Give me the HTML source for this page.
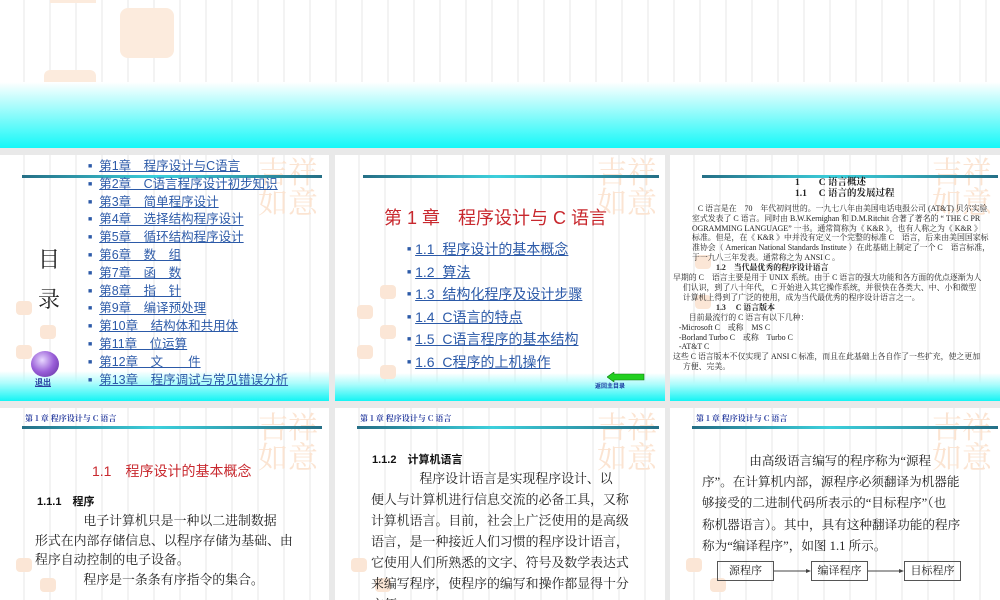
<!DOCTYPE html>
<html><head><meta charset="utf-8"><style>
*{margin:0;padding:0;box-sizing:border-box}
body{width:1000px;height:600px;overflow:hidden;background:#e9e9e9;position:relative;font-family:"Liberation Sans","Noto Sans CJK SC",sans-serif}
.s{position:absolute;background:#fff;overflow:hidden;
background-image:repeating-linear-gradient(90deg,transparent 0,transparent 23px,#f3f3f3 23px,#f3f3f3 25px,transparent 25px,transparent 26px);}
.grad{position:absolute;left:0;right:0;bottom:0;height:28px;background:linear-gradient(rgba(255,255,255,0),#aefcfc 40%,#14f4f4)}
.bar{position:absolute;height:3px;background:linear-gradient(90deg,#256f86,#3cd0dc 45%,#256f86)}
.a{position:absolute;white-space:nowrap}
.seal{position:absolute;color:#fbe4d2;font-family:"Noto Serif CJK SC",serif;line-height:1}
.st{position:absolute;width:16px;height:14px;background:#fbe6d6;border-radius:4px}
.li{color:#2c5aa8;text-decoration:underline}
.b{color:#2c5aa8;font-size:7px;vertical-align:middle}
.hd{position:absolute;font-size:8px;font-weight:bold;color:#2a3fa0;font-family:"Noto Serif CJK SC",serif}
.sr{font-family:"Liberation Serif","Noto Serif CJK SC",serif;color:#222}
.list div{white-space:nowrap;overflow:visible}
</style></head><body>

<!-- top slide -->
<div class="s" style="left:0;top:0;width:1000px;height:148px">
 <div style="position:absolute;left:120px;top:8px;width:54px;height:50px;background:#fcebdd;border-radius:8px"></div>
 <div style="position:absolute;left:44px;top:70px;width:52px;height:14px;background:#fcebdd;border-radius:6px 6px 0 0"></div>
 <div style="position:absolute;left:50px;top:0;width:46px;height:3px;background:#fcebdd"></div>
 <div style="position:absolute;left:0;right:0;top:82px;height:66px;background:linear-gradient(#ffffff,#aefcfc 35%,#14f8f8)"></div>
</div>

<!-- row1 slide1 -->
<div class="s" style="left:0;top:155px;width:329px;height:246px">
 <div class="grad" style="height:30px"></div>
 <div class="seal" style="left:258px;top:0;font-size:30px">吉祥<br>如意</div>
 <div class="bar" style="left:22px;top:20px;width:300px"></div>
 <div class="st" style="left:16px;top:146px"></div><div class="st" style="left:40px;top:170px"></div><div class="st" style="left:16px;top:190px"></div>
 <div class="a sr" style="left:38px;top:88px;font-size:22px">目</div>
 <div class="a sr" style="left:38px;top:128px;font-size:22px">录</div>
 <div style="position:absolute;left:31px;top:196px;width:28px;height:26px;border-radius:50%;background:radial-gradient(circle at 40% 35%,#e8d8ff,#9a5fd8 50%,#5a2d9a)"></div>
 <div class="a" style="left:35px;top:222px;font-size:8px;font-weight:bold;color:#2a3fa0;text-decoration:underline">退出</div>
 <div class="a list" style="left:88px;top:3px;font-size:12.5px;line-height:17.8px">
  <div style="height:17.8px"><span class="b">■</span>&nbsp; <span class="li">第1章　程序设计与C语言</span></div>
  <div style="height:17.8px"><span class="b">■</span>&nbsp; <span class="li">第2章　C语言程序设计初步知识</span></div>
  <div style="height:17.8px"><span class="b">■</span>&nbsp; <span class="li">第3章　简单程序设计 </span></div>
  <div style="height:17.8px"><span class="b">■</span>&nbsp; <span class="li">第4章　选择结构程序设计 </span></div>
  <div style="height:17.8px"><span class="b">■</span>&nbsp; <span class="li">第5章　循环结构程序设计 </span></div>
  <div style="height:17.8px"><span class="b">■</span>&nbsp; <span class="li">第6章　数　组 </span></div>
  <div style="height:17.8px"><span class="b">■</span>&nbsp; <span class="li">第7章　函　数 </span></div>
  <div style="height:17.8px"><span class="b">■</span>&nbsp; <span class="li">第8章　指　针 </span></div>
  <div style="height:17.8px"><span class="b">■</span>&nbsp; <span class="li">第9章　编译预处理 </span></div>
  <div style="height:17.8px"><span class="b">■</span>&nbsp; <span class="li">第10章　结构体和共用体 </span></div>
  <div style="height:17.8px"><span class="b">■</span>&nbsp; <span class="li">第11章　位运算 </span></div>
  <div style="height:17.8px"><span class="b">■</span>&nbsp; <span class="li">第12章　文　　件 </span></div>
  <div style="height:17.8px"><span class="b">■</span>&nbsp; <span class="li">第13章　程序调试与常见错误分析</span></div>
 </div>
</div>

<!-- row1 slide2 -->
<div class="s" style="left:335px;top:155px;width:330px;height:246px">
 <div class="grad"></div>
 <div class="seal" style="left:262px;top:0;font-size:30px">吉祥<br>如意</div>
 <div class="bar" style="left:28px;top:20px;width:296px"></div>
 <div class="st" style="left:45px;top:130px"></div><div class="st" style="left:22px;top:150px"></div><div class="st" style="left:45px;top:170px"></div><div class="st" style="left:22px;top:190px"></div><div class="st" style="left:45px;top:210px"></div>
 <div class="a" style="left:49px;top:49px;font-size:18px;color:#c8282e">第 1 章　程序设计与 C 语言</div>
 <div class="a list" style="left:72px;top:83px;line-height:22.6px;font-size:14px">
  <div style="height:22.6px"><span class="b">■</span> <span class="li">1.1&nbsp; 程序设计的基本概念 </span></div>
  <div style="height:22.6px"><span class="b">■</span> <span class="li">1.2&nbsp; 算法 </span></div>
  <div style="height:22.6px"><span class="b">■</span> <span class="li">1.3&nbsp; 结构化程序及设计步骤 </span></div>
  <div style="height:22.6px"><span class="b">■</span> <span class="li">1.4&nbsp; C语言的特点 </span></div>
  <div style="height:22.6px"><span class="b">■</span> <span class="li">1.5&nbsp; C语言程序的基本结构 </span></div>
  <div style="height:22.6px"><span class="b">■</span> <span class="li">1.6&nbsp; C程序的上机操作 </span></div>
 </div>
 <svg style="position:absolute;left:272px;top:217px" width="40" height="10"><polygon points="0,5 7,0 7,2 37,2 37,8 7,8 7,10" fill="#22d020" stroke="#117711" stroke-width=".6"/></svg>
 <div class="a" style="left:260px;top:226px;font-size:6px;font-weight:bold;color:#1a3aa0">返回主目录</div>
</div>

<!-- row1 slide3 -->
<div class="s sr" style="left:670px;top:155px;width:330px;height:246px;font-size:7.9px;line-height:9.8px">
 <div class="grad"></div>
 <div class="seal" style="left:262px;top:0;font-size:30px">吉祥<br>如意</div>
 <div class="bar" style="left:32px;top:20px;width:296px"></div>
 <div class="st" style="left:25px;top:100px"></div><div class="st" style="left:25px;top:140px"></div>
 <div class="a" style="left:125px;top:24px;font-size:9.5px;font-weight:bold">1　　C 语言概述</div>
 <div class="a" style="left:125px;top:35px;font-size:9.5px;font-weight:bold">1.1　 C 语言的发展过程</div>
 <div class="a" style="left:20px;top:49px">
  <div>&nbsp;&nbsp;&nbsp;&nbsp;C 语言是在　70　年代初问世的。一九七八年由美国电话电报公司 (AT&amp;T) 贝尔实验</div>
  <div>&nbsp;室式发表了 C 语言。同时由 B.W.Kernighan 和 D.M.Ritchit 合著了著名的 “ THE C PR</div>
  <div>&nbsp;OGRAMMING LANGUAGE” 一书。通常简称为《 K&amp;R 》，也有人称之为《 K&amp;R 》</div>
  <div>&nbsp;标准。但是，在《 K&amp;R 》中并没有定义一个完整的标准 C　语言，后来由美国国家标</div>
  <div>&nbsp;准协会（ American National Standards Institute ）在此基础上制定了一个 C　语言标准，</div>
  <div>&nbsp;于一九八三年发表。通常称之为 ANSI C 。</div>
 </div>
 <div class="a" style="left:46px;top:108px;font-weight:bold">1.2　当代最优秀的程序设计语言</div>
 <div class="a" style="left:3px;top:118px">
  <div>早期的 C　语言主要是用于 UNIX 系统。由于 C 语言的强大功能和各方面的优点逐渐为人</div>
  <div>&nbsp;&nbsp;&nbsp;&nbsp;&nbsp;们认识，到了八十年代， C 开始进入其它操作系统，并很快在各类大、中、小和微型</div>
  <div>&nbsp;&nbsp;&nbsp;&nbsp;&nbsp;计算机上得到了广泛的使用，成为当代最优秀的程序设计语言之一。</div>
 </div>
 <div class="a" style="left:46px;top:148px;font-weight:bold">1.3　 C 语言版本</div>
 <div class="a" style="left:3px;top:158px">
  <div>&nbsp;&nbsp;&nbsp;&nbsp;&nbsp;&nbsp;&nbsp;&nbsp;目前最流行的 C 语言有以下几种：</div>
  <div>&nbsp;&nbsp;&nbsp;-Microsoft C　或称　MS C</div>
  <div>&nbsp;&nbsp;&nbsp;-Borland Turbo C　或称　Turbo C</div>
  <div>&nbsp;&nbsp;&nbsp;-AT&amp;T C</div>
  <div>这些 C 语言版本不仅实现了 ANSI C 标准，而且在此基础上各自作了一些扩充，使之更加</div>
  <div>&nbsp;&nbsp;&nbsp;&nbsp;&nbsp;方便、完美。</div>
 </div>
</div>

<!-- row2 slide1 -->
<div class="s" style="left:0;top:408px;width:329px;height:192px">
 <div class="seal" style="left:258px;top:2px;font-size:30px">吉祥<br>如意</div>
 <div class="hd" style="left:25px;top:5px">第 1 章 程序设计与 C 语言</div>
 <div class="bar" style="left:22px;top:18px;width:300px"></div>
 <div class="st" style="left:16px;top:150px"></div><div class="st" style="left:40px;top:170px"></div>
 <div class="a" style="left:92px;top:53px;font-size:14px;color:#c8282e">1.1　程序设计的基本概念</div>
 <div class="a" style="left:37px;top:85px;font-size:11px;font-weight:bold;color:#111">1.1.1　程序</div>
 <div class="a sr" style="left:35px;top:104px;font-size:12.9px;line-height:19.6px">
  <div>&nbsp;&nbsp;&nbsp;&nbsp;&nbsp;&nbsp;&nbsp;&nbsp;&nbsp;&nbsp;&nbsp;&nbsp;&nbsp;&nbsp;&nbsp;电子计算机只是一种以二进制数据</div>
  <div>形式在内部存储信息、以程序存储为基础、由</div>
  <div>程序自动控制的电子设备。</div>
  <div>&nbsp;&nbsp;&nbsp;&nbsp;&nbsp;&nbsp;&nbsp;&nbsp;&nbsp;&nbsp;&nbsp;&nbsp;&nbsp;&nbsp;&nbsp;程序是一条条有序指令的集合。</div>
 </div>
</div>

<!-- row2 slide2 -->
<div class="s" style="left:335px;top:408px;width:330px;height:192px">
 <div class="seal" style="left:262px;top:2px;font-size:30px">吉祥<br>如意</div>
 <div class="hd" style="left:25px;top:5px">第 1 章 程序设计与 C 语言</div>
 <div class="bar" style="left:22px;top:18px;width:302px"></div>
 <div class="st" style="left:16px;top:150px"></div><div class="st" style="left:40px;top:170px"></div>
 <div class="a" style="left:37px;top:43px;font-size:11px;font-weight:bold;color:#111">1.1.2　计算机语言</div>
 <div class="a sr" style="left:36px;top:61px;font-size:12.9px;line-height:21px">
  <div>&nbsp;&nbsp;&nbsp;&nbsp;&nbsp;&nbsp;&nbsp;&nbsp;&nbsp;&nbsp;&nbsp;&nbsp;&nbsp;&nbsp;&nbsp;程序设计语言是实现程序设计、以</div>
  <div>便人与计算机进行信息交流的必备工具，又称</div>
  <div>计算机语言。目前，社会上广泛使用的是高级</div>
  <div>语言，是一种接近人们习惯的程序设计语言，</div>
  <div>它使用人们所熟悉的文字、符号及数学表达式</div>
  <div>来编写程序，使程序的编写和操作都显得十分</div>
  <div>方便。</div>
 </div>
</div>

<!-- row2 slide3 -->
<div class="s" style="left:670px;top:408px;width:330px;height:192px">
 <div class="seal" style="left:262px;top:2px;font-size:30px">吉祥<br>如意</div>
 <div class="hd" style="left:26px;top:5px">第 1 章 程序设计与 C 语言</div>
 <div class="bar" style="left:22px;top:18px;width:306px"></div>
 <div class="st" style="left:16px;top:150px"></div><div class="st" style="left:40px;top:170px"></div>
 <div class="a sr" style="left:32px;top:43px;font-size:12.6px;line-height:21.2px">
  <div>&nbsp;&nbsp;&nbsp;&nbsp;&nbsp;&nbsp;&nbsp;&nbsp;&nbsp;&nbsp;&nbsp;&nbsp;&nbsp;&nbsp;&nbsp;由高级语言编写的程序称为“源程</div>
  <div>序”。在计算机内部，源程序必须翻译为机器能</div>
  <div>够接受的二进制代码所表示的“目标程序”（也</div>
  <div>称机器语言）。其中，具有这种翻译功能的程序</div>
  <div>称为“编译程序”，如图 1.1 所示。</div>
 </div>
 <div class="a sr" style="left:47px;top:153px;width:57px;height:20px;border:1px solid #555;font-size:11px;text-align:center;line-height:18px">源程序</div>
 <div class="a sr" style="left:141px;top:153px;width:57px;height:20px;border:1px solid #555;font-size:11px;text-align:center;line-height:18px">编译程序</div>
 <div class="a sr" style="left:234px;top:153px;width:57px;height:20px;border:1px solid #555;font-size:11px;text-align:center;line-height:18px">目标程序</div>
 <svg style="position:absolute;left:104px;top:158px" width="190" height="10"><line x1="0" y1="5" x2="34" y2="5" stroke="#444"/><polygon points="37,5 32,3 32,7" fill="#444"/><line x1="94" y1="5" x2="127" y2="5" stroke="#444"/><polygon points="130,5 125,3 125,7" fill="#444"/></svg>
</div>
</body></html>
